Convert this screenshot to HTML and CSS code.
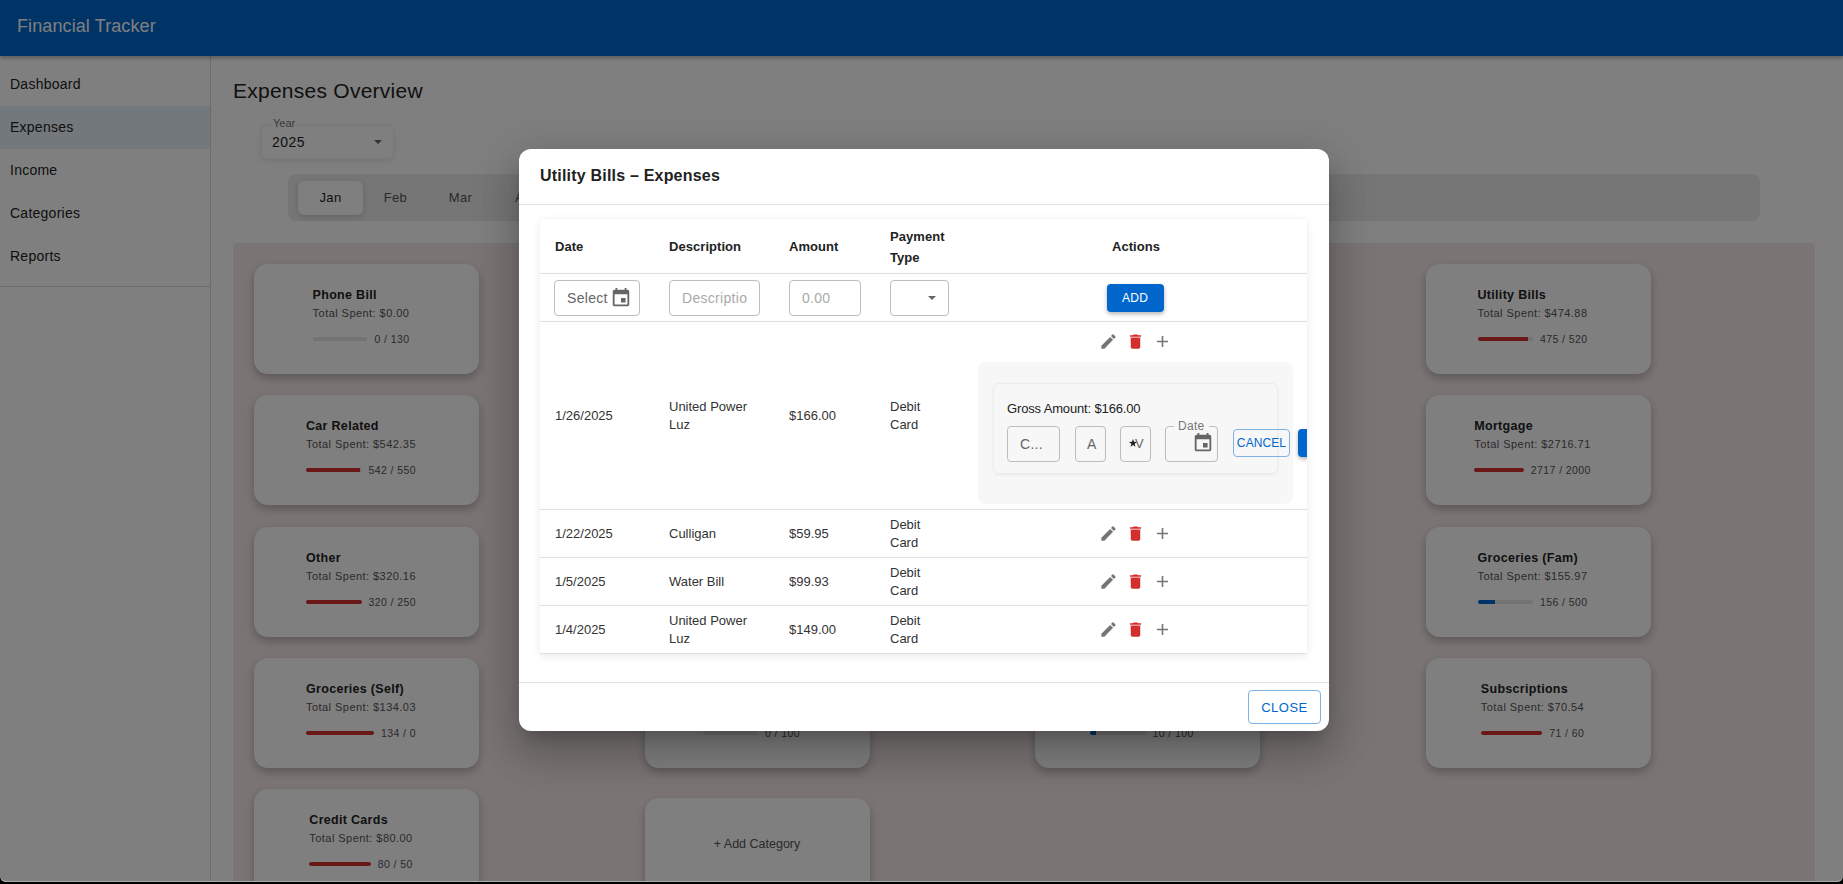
FILE: index.html
```html
<html>
  <head>
    <title>Financial Tracker</title>
    <link rel="stylesheet" href="styles.css">
  </head>
  <body>
    <div class="app">
      <header class="topbar">Financial Tracker</header>

      <div class="layout">
        <nav class="sidebar">
          <div class="nav_list">
            <a class="nav_item">Dashboard</a>
            <a class="nav_item active">Expenses</a>
            <a class="nav_item">Income</a>
            <a class="nav_item">Categories</a>
            <a class="nav_item">Reports</a>
          </div>
        </nav>

        <main class="content">
          <h1 class="page_title">Expenses Overview</h1>

          <div class="year_select">
            <span class="year_label">Year</span>
            <span class="year_value">2025</span>
            <span class="caret"></span>
          </div>

          <div class="month_tabs">
            <span class="tab selected">Jan</span>
            <span class="tab">Feb</span>
            <span class="tab">Mar</span>
            <span class="tab">Apr</span>
            <span class="tab">May</span>
            <span class="tab">Jun</span>
            <span class="tab">Jul</span>
            <span class="tab">Aug</span>
            <span class="tab">Sep</span>
            <span class="tab">Oct</span>
            <span class="tab">Nov</span>
            <span class="tab">Dec</span>
          </div>

          <div class="cat_grid">
            <div class="card"><div class="card_body">
              <div class="card_name">Phone Bill</div>
              <div class="card_total">Total Spent: $0.00</div>
              <div class="card_meter"><span class="meter"></span><span class="meter_text">0 / 130</span></div>
            </div></div>
            <div class="card"></div>
            <div class="card"></div>
            <div class="card"><div class="card_body">
              <div class="card_name">Utility Bills</div>
              <div class="card_total">Total Spent: $474.88</div>
              <div class="card_meter"><span class="meter"><i class="fill over" style="width:91%"></i></span><span class="meter_text">475 / 520</span></div>
            </div></div>

            <div class="card"><div class="card_body">
              <div class="card_name">Car Related</div>
              <div class="card_total">Total Spent: $542.35</div>
              <div class="card_meter"><span class="meter"><i class="fill over" style="width:98%"></i></span><span class="meter_text">542 / 550</span></div>
            </div></div>
            <div class="card"></div>
            <div class="card"></div>
            <div class="card"><div class="card_body">
              <div class="card_name">Mortgage</div>
              <div class="card_total">Total Spent: $2716.71</div>
              <div class="card_meter"><span class="meter"><i class="fill over" style="width:100%"></i></span><span class="meter_text">2717 / 2000</span></div>
            </div></div>

            <div class="card"><div class="card_body">
              <div class="card_name">Other</div>
              <div class="card_total">Total Spent: $320.16</div>
              <div class="card_meter"><span class="meter"><i class="fill over" style="width:100%"></i></span><span class="meter_text">320 / 250</span></div>
            </div></div>
            <div class="card"></div>
            <div class="card"></div>
            <div class="card"><div class="card_body">
              <div class="card_name">Groceries (Fam)</div>
              <div class="card_total">Total Spent: $155.97</div>
              <div class="card_meter"><span class="meter"><i class="fill" style="width:31%"></i></span><span class="meter_text">156 / 500</span></div>
            </div></div>

            <div class="card"><div class="card_body">
              <div class="card_name">Groceries (Self)</div>
              <div class="card_total">Total Spent: $134.03</div>
              <div class="card_meter"><span class="meter"><i class="fill over" style="width:100%"></i></span><span class="meter_text">134 / 0</span></div>
            </div></div>
            <div class="card"><div class="card_body">
              <div class="card_name">Pets</div>
              <div class="card_total">Total Spent: $0.00</div>
              <div class="card_meter"><span class="meter"></span><span class="meter_text">0 / 100</span></div>
            </div></div>
            <div class="card"><div class="card_body">
              <div class="card_name">Gifts</div>
              <div class="card_total">Total Spent: $10.00</div>
              <div class="card_meter"><span class="meter"><i class="fill" style="width:10%"></i></span><span class="meter_text">10 / 100</span></div>
            </div></div>
            <div class="card"><div class="card_body">
              <div class="card_name">Subscriptions</div>
              <div class="card_total">Total Spent: $70.54</div>
              <div class="card_meter"><span class="meter"><i class="fill over" style="width:100%"></i></span><span class="meter_text">71 / 60</span></div>
            </div></div>

            <div class="card"><div class="card_body">
              <div class="card_name">Credit Cards</div>
              <div class="card_total">Total Spent: $80.00</div>
              <div class="card_meter"><span class="meter"><i class="fill over" style="width:100%"></i></span><span class="meter_text">80 / 50</span></div>
            </div></div>
            <div class="card add_card">+ Add Category</div>
          </div>
        </main>
      </div>

      <!-- Dialog sits over the dimmed page -->
      <div class="backdrop">
        <div class="dialog">
          <div class="dialog_title">Utility Bills – Expenses</div>

          <div class="dialog_body">
            <table class="tx_table">
              <colgroup>
                <col class="col_date"><col class="col_desc"><col class="col_amount"><col class="col_type"><col>
              </colgroup>
              <thead>
                <tr>
                  <th>Date</th>
                  <th>Description</th>
                  <th>Amount</th>
                  <th>Payment Type</th>
                  <th class="center">Actions</th>
                </tr>
              </thead>
              <tbody>
                <tr class="entry_row">
                  <td>
                    <div class="field w_date">
                      <span class="field_text dark">Select</span>
                      <svg class="icon cal" viewBox="0 0 24 24"><path d="M17 12h-5v5h5v-5zM19 3h-1V1h-2v2H8V1H6v2H5c-1.11 0-1.99.9-1.99 2L3 19c0 1.1.89 2 2 2h14c1.1 0 2-.9 2-2V5c0-1.1-.9-2-2-2zm0 16H5V8h14v11z"/></svg>
                    </div>
                  </td>
                  <td><div class="field w_desc"><span class="field_text">Descriptio</span></div></td>
                  <td><div class="field w_amount"><span class="field_text">0.00</span></div></td>
                  <td><div class="field w_type"><span class="caret"></span></div></td>
                  <td class="center"><button class="btn_add">ADD</button></td>
                </tr>

                <tr class="open_row">
                  <td>1/26/2025</td>
                  <td>United Power Luz</td>
                  <td>$166.00</td>
                  <td>Debit Card</td>
                  <td class="center top_cell">
                    <div class="actions">
                      <svg class="icon edit" viewBox="0 0 24 24"><path d="M3 17.25V21h3.75L17.81 9.94l-3.75-3.75L3 17.25zM20.71 7.04c.39-.39.39-1.02 0-1.41l-2.34-2.34c-.39-.39-1.02-.39-1.41 0l-1.83 1.83 3.75 3.75 1.83-1.83z"/></svg>
                      <svg class="icon trash" viewBox="0 0 24 24"><path d="M6 19c0 1.1.9 2 2 2h8c1.1 0 2-.9 2-2V7H6v12zM19 4h-3.5l-1-1h-5l-1 1H5v2h14V4z"/></svg>
                      <svg class="icon edit" viewBox="0 0 24 24"><path d="M19 13h-6v6h-2v-6H5v-2h6V5h2v6h6v2z"/></svg>
                    </div>
                    <div class="split_panel">
                      <div class="split_card">
                        <div class="gross">Gross Amount: $166.00</div>
                        <div class="split_row">
                          <div class="field w_c"><span class="field_text dark">C...</span></div>
                          <div class="field w_small"><span class="field_text dark">A</span></div>
                          <div class="field w_small">
                            <svg class="star" viewBox="0 0 10 10"><polygon points="5,0 6.3,3.4 10,3.6 7.1,5.9 8.1,9.6 5,7.5 1.9,9.6 2.9,5.9 0,3.6 3.7,3.4"/></svg>
                            <span class="field_text dark overlap">V</span>
                          </div>
                          <div class="field w_when">
                            <span class="notch_label">Date</span>
                            <svg class="icon cal" viewBox="0 0 24 24"><path d="M17 12h-5v5h5v-5zM19 3h-1V1h-2v2H8V1H6v2H5c-1.11 0-1.99.9-1.99 2L3 19c0 1.1.89 2 2 2h14c1.1 0 2-.9 2-2V5c0-1.1-.9-2-2-2zm0 16H5V8h14v11z"/></svg>
                          </div>
                          <button class="btn_cancel">CANCEL</button>
                          <button class="btn_save">SAVE</button>
                        </div>
                      </div>
                    </div>
                  </td>
                </tr>

                <tr>
                  <td>1/22/2025</td>
                  <td>Culligan</td>
                  <td>$59.95</td>
                  <td>Debit Card</td>
                  <td class="center">
                    <div class="actions">
                      <svg class="icon edit" viewBox="0 0 24 24"><path d="M3 17.25V21h3.75L17.81 9.94l-3.75-3.75L3 17.25zM20.71 7.04c.39-.39.39-1.02 0-1.41l-2.34-2.34c-.39-.39-1.02-.39-1.41 0l-1.83 1.83 3.75 3.75 1.83-1.83z"/></svg>
                      <svg class="icon trash" viewBox="0 0 24 24"><path d="M6 19c0 1.1.9 2 2 2h8c1.1 0 2-.9 2-2V7H6v12zM19 4h-3.5l-1-1h-5l-1 1H5v2h14V4z"/></svg>
                      <svg class="icon edit" viewBox="0 0 24 24"><path d="M19 13h-6v6h-2v-6H5v-2h6V5h2v6h6v2z"/></svg>
                    </div>
                  </td>
                </tr>
                <tr>
                  <td>1/5/2025</td>
                  <td>Water Bill</td>
                  <td>$99.93</td>
                  <td>Debit Card</td>
                  <td class="center">
                    <div class="actions">
                      <svg class="icon edit" viewBox="0 0 24 24"><path d="M3 17.25V21h3.75L17.81 9.94l-3.75-3.75L3 17.25zM20.71 7.04c.39-.39.39-1.02 0-1.41l-2.34-2.34c-.39-.39-1.02-.39-1.41 0l-1.83 1.83 3.75 3.75 1.83-1.83z"/></svg>
                      <svg class="icon trash" viewBox="0 0 24 24"><path d="M6 19c0 1.1.9 2 2 2h8c1.1 0 2-.9 2-2V7H6v12zM19 4h-3.5l-1-1h-5l-1 1H5v2h14V4z"/></svg>
                      <svg class="icon edit" viewBox="0 0 24 24"><path d="M19 13h-6v6h-2v-6H5v-2h6V5h2v6h6v2z"/></svg>
                    </div>
                  </td>
                </tr>
                <tr>
                  <td>1/4/2025</td>
                  <td>United Power Luz</td>
                  <td>$149.00</td>
                  <td>Debit Card</td>
                  <td class="center">
                    <div class="actions">
                      <svg class="icon edit" viewBox="0 0 24 24"><path d="M3 17.25V21h3.75L17.81 9.94l-3.75-3.75L3 17.25zM20.71 7.04c.39-.39.39-1.02 0-1.41l-2.34-2.34c-.39-.39-1.02-.39-1.41 0l-1.83 1.83 3.75 3.75 1.83-1.83z"/></svg>
                      <svg class="icon trash" viewBox="0 0 24 24"><path d="M6 19c0 1.1.9 2 2 2h8c1.1 0 2-.9 2-2V7H6v12zM19 4h-3.5l-1-1h-5l-1 1H5v2h14V4z"/></svg>
                      <svg class="icon edit" viewBox="0 0 24 24"><path d="M19 13h-6v6h-2v-6H5v-2h6V5h2v6h6v2z"/></svg>
                    </div>
                  </td>
                </tr>
              </tbody>
            </table>
          </div>

          <div class="dialog_footer">
            <button class="btn_close">CLOSE</button>
          </div>
        </div>
      </div>
    </div>
  </body>
</html>
```

FILE: styles.css
```css
html, body {
  margin: 0;
  height: 100%;
  background: #000;
  overflow: hidden;
  font-family: "Liberation Sans", Arial, sans-serif;
  color: #222;
}

.app {
  position: relative;
  height: 881px;
  background: #fff;
  overflow: hidden;
  border-bottom: 1px solid #aaa;
  border-radius: 0 0 6px 6px;
}

/* top bar */
.topbar {
  height: 56px;
  padding-left: 17px;
  background: #0066cc;
  color: #fff;
  font-size: 18px;
  line-height: 52px;
  letter-spacing: 0.1px;
  box-shadow: 0 2px 4px rgba(0, 0, 0, 0.3);
  position: relative;
}

.layout {
  display: flex;
  height: 825px;
}

/* side nav */
.sidebar {
  width: 210px;
  flex: none;
  border-right: 1px solid #d8d8d8;
}
.nav_list {
  padding: 7px 0 8px;
  border-bottom: 1px solid #d8d8d8;
}
.nav_item {
  display: block;
  height: 43px;
  padding-left: 10px;
  font-size: 14px;
  line-height: 42px;
  letter-spacing: 0.25px;
}
.nav_item.active {
  background: #e6f0fa;
}

/* main column */
.content {
  flex: 1;
  padding: 0 28px 0 22px;
  overflow: hidden;
}
.page_title {
  margin: 0;
  padding-top: 22px;
  font-size: 21px;
  font-weight: normal;
  line-height: 26px;
  letter-spacing: 0.25px;
}
.year_select {
  position: relative;
  display: flex;
  align-items: center;
  justify-content: space-between;
  box-sizing: border-box;
  width: 133px;
  height: 34px;
  margin: 21px 0 0 28px;
  padding: 0 11px 0 10px;
  border-radius: 6px;
  box-shadow: 0 2px 6px rgba(0, 0, 0, 0.1);
  border: 1px solid #f0f0f0;
}
.year_label {
  position: absolute;
  left: 10px;
  top: -9px;
  padding: 0 1px;
  background: #fff;
  color: #777;
  font-size: 11px;
  line-height: 12px;
}
.year_value {
  font-size: 14px;
  letter-spacing: 0.5px;
}
.caret {
  width: 0;
  height: 0;
  border-left: 4.5px solid transparent;
  border-right: 4.5px solid transparent;
  border-top: 4.5px solid #666;
}
.month_tabs {
  display: flex;
  align-items: center;
  box-sizing: border-box;
  height: 47px;
  margin: 15px 55px 0 55px;
  padding: 0 10px;
  background: #ececec;
  border-radius: 8px;
}
.tab {
  width: 65px;
  height: 34px;
  flex: none;
  color: #555;
  font-size: 13px;
  line-height: 34px;
  letter-spacing: 0.3px;
  text-align: center;
}
.tab.selected {
  background: #fff;
  color: #222;
  border-radius: 6px;
  box-shadow: 0 2px 6px rgba(0, 0, 0, 0.15);
}

/* category cards */
.cat_grid {
  display: grid;
  grid-template-columns: repeat(4, 225px);
  column-gap: 165.5px;
  grid-auto-rows: 110px;
  row-gap: 21.25px;
  height: 700px;
  margin-top: 22px;
  padding: 21px 0 0 21px;
  background: #f5e9e8;
  border-radius: 4px;
}
.card {
  display: flex;
  justify-content: center;
  padding-right: 11px;
  background: #fff;
  border-radius: 14px;
  box-shadow: 0 4px 10px rgba(0, 0, 0, 0.25);
}
.card_body {
  padding-top: 22px;
}
.card_name {
  font-size: 12.5px;
  font-weight: bold;
  line-height: 18px;
  letter-spacing: 0.3px;
}
.card_total {
  color: #555;
  font-size: 11px;
  line-height: 18px;
  letter-spacing: 0.45px;
  white-space: nowrap;
}
.card_meter {
  display: flex;
  align-items: center;
  gap: 7px;
  margin-top: 8px;
}
.meter {
  display: block;
  flex: 1;
  width: 0;
  height: 4px;
  background: #e6e6e6;
  border-radius: 2px;
  overflow: hidden;
}
.fill {
  display: block;
  height: 100%;
  background: #0066cc;
}
.fill.over {
  background: #d32f2f;
}
.meter_text {
  color: #555;
  font-size: 10.5px;
  line-height: 18px;
  letter-spacing: 0.4px;
  white-space: nowrap;
}
.add_card {
  align-items: center;
  margin-top: 9px;
  padding: 0 0 10px;
  color: #555;
  font-size: 12.5px;
}

/* dialog */
.backdrop {
  position: absolute;
  left: 0;
  top: 0;
  right: 0;
  height: 884px;
  background: rgba(0, 0, 0, 0.5);
}
.dialog {
  position: absolute;
  left: 519px;
  top: 149px;
  display: flex;
  flex-direction: column;
  width: 810px;
  height: 582px;
  background: #fff;
  border-radius: 12px;
  box-shadow: 0 11px 15px -7px rgba(0, 0, 0, 0.2), 0 24px 38px 3px rgba(0, 0, 0, 0.14), 0 9px 46px 8px rgba(0, 0, 0, 0.12);
}
.dialog_title {
  height: 55px;
  padding-left: 21px;
  border-bottom: 1px solid #e0e0e0;
  font-size: 16px;
  font-weight: bold;
  line-height: 54px;
  letter-spacing: 0.2px;
}
.dialog_body {
  flex: 1;
  padding: 14px 22px 0 21px;
}
.tx_table {
  width: 767px;
  table-layout: fixed;
  border-collapse: collapse;
  border-radius: 4px;
  box-shadow: 0 2px 8px rgba(0, 0, 0, 0.09);
  font-size: 13px;
}
.col_date { width: 114px; }
.col_desc { width: 120px; }
.col_amount { width: 101px; }
.col_type { width: 88px; }

.tx_table th {
  box-sizing: border-box;
  height: 54px;
  padding: 2px 15px 0;
  border-bottom: 1px solid #e0e0e0;
  font-size: 13px;
  line-height: 21px;
  letter-spacing: 0.05px;
  text-align: left;
}
.tx_table th.center {
  padding-left: 17px;
  text-align: center;
}
.tx_table td {
  box-sizing: border-box;
  height: 48px;
  padding: 2px 15px 0;
  border-bottom: 1px solid #e0e0e0;
  line-height: 18px;
  color: #333;
}
.tx_table td.center {
  padding: 0 15px;
  text-align: center;
}
.tx_table .open_row td {
  height: 188px;
}
.tx_table td.top_cell {
  padding: 0;
  vertical-align: top;
}
.actions {
  display: flex;
  justify-content: center;
  gap: 8px;
}
.open_row .actions {
  padding-top: 10px;
}
.icon {
  display: block;
  width: 19px;
  height: 19px;
  flex: none;
}
.icon.edit { fill: #757575; }
.icon.trash { fill: #d32f2f; }
.icon.cal { fill: #666; width: 22px; height: 22px; }

/* text fields */
.field {
  position: relative;
  display: flex;
  align-items: center;
  box-sizing: border-box;
  height: 36px;
  border: 1px solid #bdbdbd;
  border-radius: 4px;
  font-size: 14px;
  letter-spacing: 0.3px;
}
.field_text {
  padding-left: 12px;
  color: #aaa;
  white-space: nowrap;
}
.field_text.dark {
  color: #666;
}
.w_date {
  width: 86px;
  margin-left: -1px;
}
.w_date .icon { margin-left: 2px; }
.w_desc { width: 91px; }
.w_amount { width: 72px; }
.w_type {
  width: 59px;
  justify-content: flex-end;
  padding-right: 12px;
}
.btn_add {
  width: 57px;
  height: 28px;
  margin-top: 2px;
  padding: 0;
  border: 0;
  border-radius: 4px;
  background: #0066cc;
  color: #fff;
  font-family: inherit;
  font-size: 12px;
  letter-spacing: 0.3px;
  box-shadow: 0 2px 4px rgba(0, 0, 0, 0.3);
}

/* split editor in the expanded row */
.split_panel {
  box-sizing: border-box;
  width: 315px;
  height: 142px;
  margin: 11px 0 0 15px;
  padding: 21px 15px 0;
  background: #f7f7f7;
  border-radius: 8px;
}
.split_card {
  box-sizing: border-box;
  height: 91px;
  padding: 16px 13px 0;
  border: 1px solid #ececec;
  border-radius: 6px;
  box-shadow: 0 1px 3px rgba(0, 0, 0, 0.06);
  text-align: left;
}
.gross {
  color: #222;
  line-height: 18px;
  letter-spacing: -0.15px;
}
.split_row {
  display: flex;
  align-items: center;
  width: 300px;
  margin-top: 8px;
}
.split_row .field {
  margin-right: 14px;
  flex: none;
}
.split_row .w_c,
.split_row .w_when {
  margin-right: 15px;
}
.split_row .field_text {
  padding-left: 12px;
}
.w_c { width: 53px; }
.w_small { width: 31px; }
.split_row .w_small .field_text {
  padding-left: 11px;
}
.w_when {
  width: 53px;
  justify-content: flex-end;
  padding-right: 3px;
}
.w_when .icon {
  margin-top: -2px;
}
.notch_label {
  position: absolute;
  left: 8px;
  top: -8px;
  padding: 0 4px;
  background: #f7f7f7;
  color: #777;
  font-size: 12px;
  line-height: 14px;
}
.split_row .w_small .overlap {
  padding-left: 14px;
  font-size: 13px;
}
.star {
  position: absolute;
  left: 8px;
  top: 12px;
  z-index: 1;
  width: 8px;
  height: 8px;
  fill: #222;
}
.btn_cancel {
  width: 57px;
  height: 28px;
  flex: none;
  margin-top: -2px;
  padding: 0;
  border: 1px solid #7fb2e5;
  border-radius: 4px;
  background: transparent;
  color: #0066cc;
  font-family: inherit;
  font-size: 12px;
  letter-spacing: 0.1px;
}
.btn_save {
  width: 57px;
  height: 28px;
  flex: none;
  margin: -2px 0 0 8px;
  padding: 0;
  border: 0;
  border-radius: 4px;
  background: #0066cc;
  color: #fff;
  font-family: inherit;
  font-size: 12px;
  box-shadow: 0 2px 4px rgba(0, 0, 0, 0.3);
  clip-path: inset(-6px 48px -6px -6px);
}

.dialog_footer {
  display: flex;
  justify-content: flex-end;
  align-items: flex-start;
  height: 41px;
  padding: 7px 8px 0 0;
  border-top: 1px solid #e0e0e0;
}
.btn_close {
  width: 73px;
  height: 34px;
  padding: 0;
  border: 1px solid #7fb2e5;
  border-radius: 4px;
  background: #fff;
  color: #0066cc;
  font-family: inherit;
  font-size: 13px;
  letter-spacing: 0.5px;
}
```
